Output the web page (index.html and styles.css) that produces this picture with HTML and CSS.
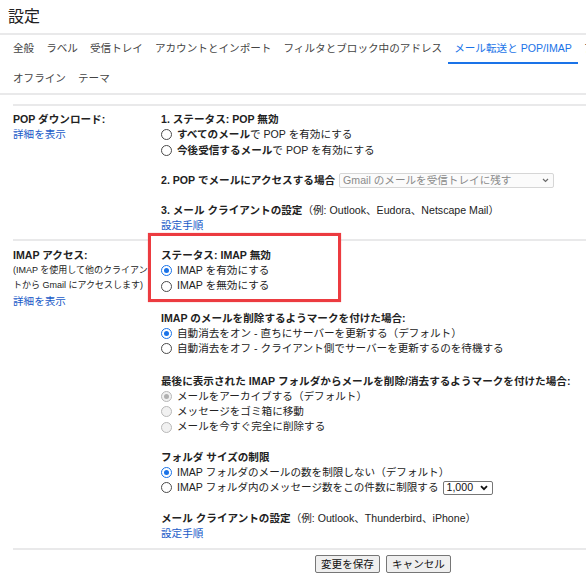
FILE: index.html
```html
<!DOCTYPE html>
<html lang="ja">
<head>
<meta charset="utf-8">
<title>設定</title>
<link rel="stylesheet" href="styles.css">
</head>
<body>
<header class="page-head"><h1 class="title">設定</h1></header>
<nav class="tabs">
  <div class="tab-row">
    <a class="tab">全般</a>
    <a class="tab">ラベル</a>
    <a class="tab">受信トレイ</a>
    <a class="tab">アカウントとインポート</a>
    <a class="tab">フィルタとブロック中のアドレス</a>
    <a class="tab active">メール転送と POP/IMAP</a>
    <a class="tab">アドオン</a>
  </div>
  <div class="tab-row tab-row-second">
    <a class="tab">オフライン</a>
    <a class="tab">テーマ</a>
  </div>
</nav>
<main class="settings">
  <section class="setting setting-pop">
    <div class="label-col">
      <div class="label">POP ダウンロード:</div>
      <a class="link">詳細を表示</a>
    </div>
    <div class="value-col">
      <div class="group">
        <div class="heading">1. ステータス: POP 無効</div>
        <label class="option"><span class="radio"></span><span><b>すべてのメール</b>で POP を有効にする</span></label>
        <label class="option"><span class="radio"></span><span><b>今後受信するメール</b>で POP を有効にする</span></label>
      </div>
      <div class="group">
        <div class="heading heading-inline"><span>2. POP でメールにアクセスする場合</span>
          <span class="select select-disabled"><span>Gmail のメールを受信トレイに残す</span><svg width="7" height="5" viewBox="0 0 7 5"><path d="M1 1l2.5 2.5L6 1" fill="none" stroke="#6a6a6a" stroke-width="1.2"/></svg></span>
        </div>
      </div>
      <div class="group">
        <div><b>3. メール クライアントの設定</b>（例: Outlook、Eudora、Netscape Mail）</div>
        <a class="link">設定手順</a>
      </div>
    </div>
  </section>

  <section class="setting setting-imap">
    <div class="label-col">
      <div class="label">IMAP アクセス:</div>
      <div class="note">(IMAP を使用して他のクライアン<br>トから Gmail にアクセスします)</div>
      <a class="link">詳細を表示</a>
    </div>
    <div class="value-col">
      <div class="group group-status">
        <div class="highlight"></div>
        <div class="heading">ステータス: IMAP 無効</div>
        <label class="option"><span class="radio checked"></span><span>IMAP を有効にする</span></label>
        <label class="option"><span class="radio"></span><span>IMAP を無効にする</span></label>
      </div>
      <div class="group group-wide">
        <div class="heading">IMAP のメールを削除するようマークを付けた場合:</div>
        <label class="option"><span class="radio checked"></span><span>自動消去をオン - 直ちにサーバーを更新する（デフォルト）</span></label>
        <label class="option"><span class="radio"></span><span>自動消去をオフ - クライアント側でサーバーを更新するのを待機する</span></label>
      </div>
      <div class="group group-wide">
        <div class="heading">最後に表示された IMAP フォルダからメールを削除/消去するようマークを付けた場合:</div>
        <label class="option"><span class="radio disabled checked"></span><span>メールをアーカイブする（デフォルト）</span></label>
        <label class="option"><span class="radio disabled"></span><span>メッセージをゴミ箱に移動</span></label>
        <label class="option"><span class="radio disabled"></span><span>メールを今すぐ完全に削除する</span></label>
      </div>
      <div class="group">
        <div class="heading">フォルダ サイズの制限</div>
        <label class="option"><span class="radio checked"></span><span>IMAP フォルダのメールの数を制限しない（デフォルト）</span></label>
        <label class="option"><span class="radio"></span><span>IMAP フォルダ内のメッセージ数をこの件数に制限する</span>
          <span class="select select-small"><span>1,000</span><svg width="8" height="6" viewBox="0 0 8 6"><path d="M1 1.2l3 3 3-3" fill="none" stroke="#111" stroke-width="1.8"/></svg></span>
        </label>
      </div>
      <div class="group">
        <div><b>メール クライアントの設定</b>（例: Outlook、Thunderbird、iPhone）</div>
        <a class="link">設定手順</a>
      </div>
    </div>
  </section>

  <div class="actions">
    <button class="btn">変更を保存</button>
    <button class="btn">キャンセル</button>
  </div>
</main>
</body>
</html>
```
FILE: styles.css
```css
* { box-sizing: border-box; }
html, body { margin: 0; padding: 0; }
body {
  width: 586px;
  overflow: hidden;
  background: #fff;
  color: #222;
  font-family: "Liberation Sans", "Noto Sans CJK JP", sans-serif;
  font-size: 10.6px;
  line-height: 15.3px;
}
b { font-weight: 700; }

.page-head {
  height: 35px;
  padding-left: 8px;
  border-bottom: 2px solid #e9e9ea;
}
.title {
  margin: 0;
  font-size: 16px;
  font-weight: 400;
  line-height: 33px;
  color: #222;
}

.tabs {
  padding-left: 7px;
  border-bottom: 2px solid #e9e9ea;
}
.tab-row {
  display: flex;
  height: 29px;
  white-space: nowrap;
  overflow: hidden;
}
.tab-row-second { padding-top: 3px; }
.tab {
  display: flex;
  align-items: center;
  flex: none;
  padding: 0 6px;
  color: #444;
  border-bottom: 2px solid transparent;
}
.tab.active {
  color: #1a73e8;
  border-bottom-color: #1a73e8;
}

.settings {
  margin: 8.5px 0 0 13px;
}
.setting {
  display: flex;
  border-top: 2px solid #e9e9ea;
  padding: 6.5px 0 5.5px;
}
.setting-imap { padding-bottom: 7px; }
.label-col {
  flex: none;
  width: 148px;
  padding-right: 8px;
}
.label { font-weight: 700; }
.note {
  font-size: 9px;
  white-space: nowrap;
}
.link {
  display: block;
  color: #1a5bc8;
  text-decoration: none;
}
.value-col { flex: 1; min-width: 0; }

.group + .group { margin-top: 15px; }
.group + .group-wide { margin-top: 17px; }
.group-status { position: relative; }
.group-status > *:not(.highlight) { position: relative; }
.highlight {
  position: absolute;
  left: -13px;
  top: -15px;
  width: 193px;
  height: 69px;
  background: #fff;
  border: 3px solid #ec3b40;
  box-shadow: 0 0 1px rgba(236, 59, 64, 0.6);
}

.heading { font-weight: 700; white-space: nowrap; }
.heading-inline { display: flex; align-items: center; height: 15.3px; }
.heading-inline .select { margin-left: 4px; font-weight: 400; }

.option {
  display: flex;
  align-items: center;
  height: 15.3px;
  white-space: nowrap;
}
.radio {
  flex: none;
  position: relative;
  width: 11px;
  height: 11px;
  margin-right: 5px;
  border-radius: 50%;
  border: 1px solid #4a4a4a;
  background: #fff;
}
.radio.checked {
  border: 1.5px solid #1a73e8;
}
.radio.checked::after {
  content: "";
  position: absolute;
  left: 1.5px;
  top: 1.5px;
  width: 5px;
  height: 5px;
  border-radius: 50%;
  background: #1a73e8;
}
.radio.disabled {
  border: 1px solid #b8b8b8;
  background: #f1f1f1;
}
.radio.disabled.checked::after {
  left: 2px;
  top: 2px;
  background: #b0b0b0;
}

.select {
  display: inline-flex;
  align-items: center;
  justify-content: space-between;
  flex: none;
  border-radius: 2px;
  background: #fff;
}
.select-disabled {
  width: 215px;
  height: 15px;
  padding: 0 4px 0 3px;
  border: 1px solid #d6d6d6;
  color: #8a8a8a;
  background: #fbfbfb;
}
.select-small {
  width: 50px;
  height: 14px;
  margin-left: 4px;
  padding: 0 4px 0 3px;
  border: 1px solid #767676;
  color: #111;
}

.actions {
  display: flex;
  gap: 6px;
  border-top: 2px solid #e9e9ea;
  padding: 4.5px 0 0 302px;
}
.btn {
  height: 18px;
  padding: 0 5px;
  font-family: inherit;
  font-size: 10.6px;
  line-height: 16px;
  color: #111;
  background: #efefef;
  border: 1px solid #767676;
  border-radius: 2px;
}
```
